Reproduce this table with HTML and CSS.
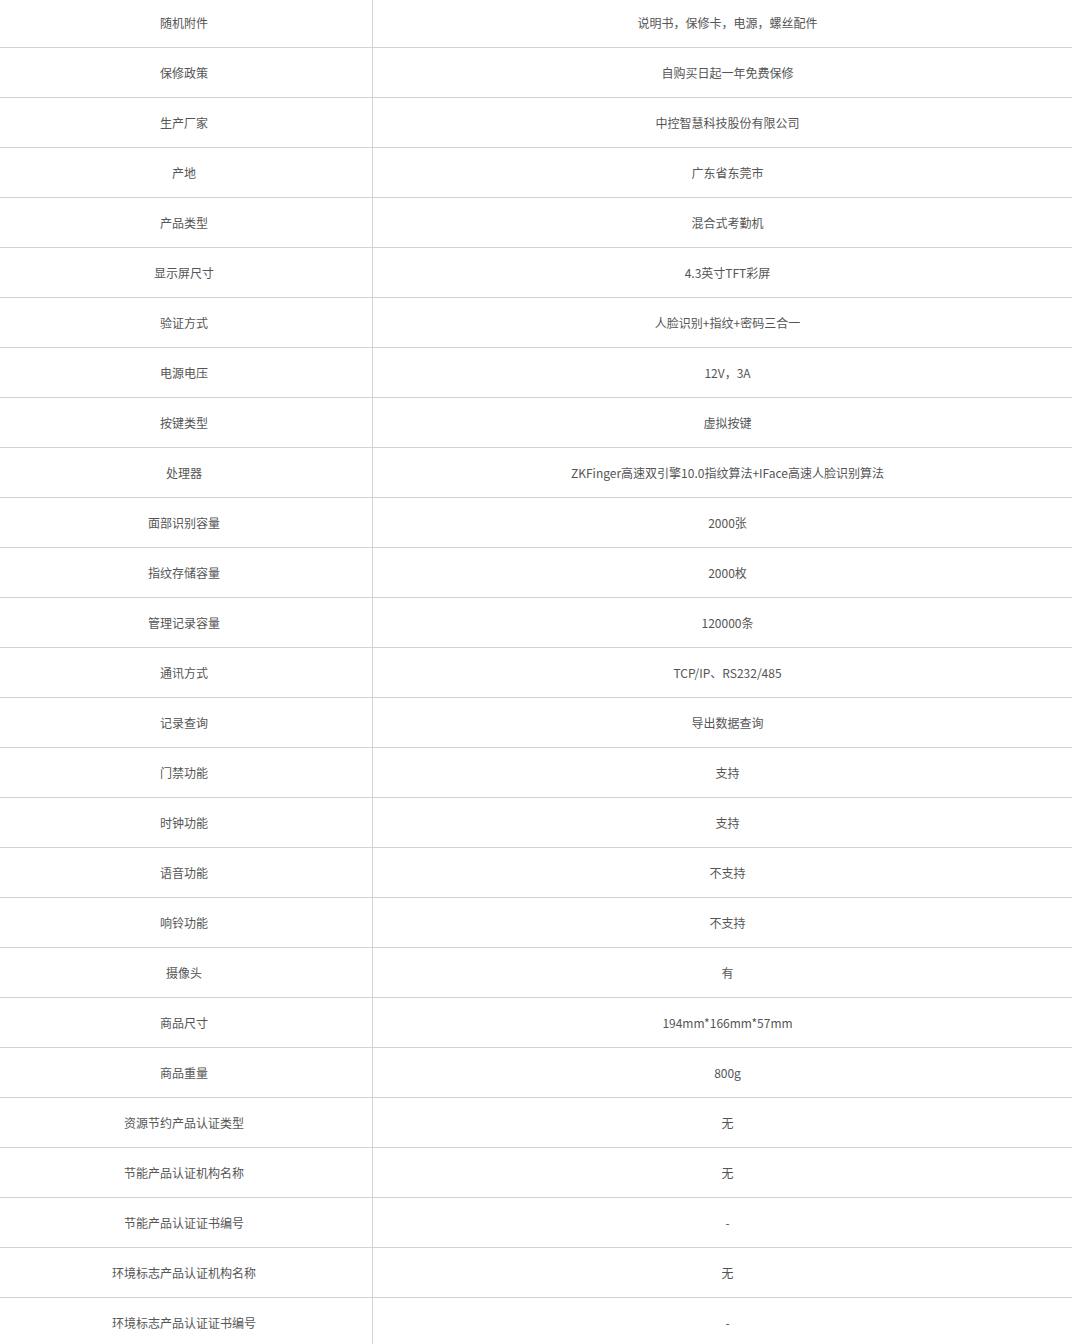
FILE: index.html
```html
<!DOCTYPE html>
<html lang="zh-CN">
<head>
<meta charset="utf-8">
<title>规格参数</title>
<link rel="stylesheet" href="styles.css">
</head>
<body>
<table class="spec">
<tbody>
<tr><td class="k">随机附件</td><td class="v">说明书，保修卡，电源，螺丝配件</td></tr>
<tr><td class="k">保修政策</td><td class="v">自购买日起一年免费保修</td></tr>
<tr><td class="k">生产厂家</td><td class="v">中控智慧科技股份有限公司</td></tr>
<tr><td class="k">产地</td><td class="v">广东省东莞市</td></tr>
<tr><td class="k">产品类型</td><td class="v">混合式考勤机</td></tr>
<tr><td class="k">显示屏尺寸</td><td class="v">4.3英寸TFT彩屏</td></tr>
<tr><td class="k">验证方式</td><td class="v">人脸识别+指纹+密码三合一</td></tr>
<tr><td class="k">电源电压</td><td class="v">12V，3A</td></tr>
<tr><td class="k">按键类型</td><td class="v">虚拟按键</td></tr>
<tr><td class="k">处理器</td><td class="v">ZKFinger高速双引擎10.0指纹算法+IFace高速人脸识别算法</td></tr>
<tr><td class="k">面部识别容量</td><td class="v">2000张</td></tr>
<tr><td class="k">指纹存储容量</td><td class="v">2000枚</td></tr>
<tr><td class="k">管理记录容量</td><td class="v">120000条</td></tr>
<tr><td class="k">通讯方式</td><td class="v">TCP/IP、RS232/485</td></tr>
<tr><td class="k">记录查询</td><td class="v">导出数据查询</td></tr>
<tr><td class="k">门禁功能</td><td class="v">支持</td></tr>
<tr><td class="k">时钟功能</td><td class="v">支持</td></tr>
<tr><td class="k">语音功能</td><td class="v">不支持</td></tr>
<tr><td class="k">响铃功能</td><td class="v">不支持</td></tr>
<tr><td class="k">摄像头</td><td class="v">有</td></tr>
<tr><td class="k">商品尺寸</td><td class="v">194mm*166mm*57mm</td></tr>
<tr><td class="k">商品重量</td><td class="v">800g</td></tr>
<tr><td class="k">资源节约产品认证类型</td><td class="v">无</td></tr>
<tr><td class="k">节能产品认证机构名称</td><td class="v">无</td></tr>
<tr><td class="k">节能产品认证证书编号</td><td class="v">-</td></tr>
<tr><td class="k">环境标志产品认证机构名称</td><td class="v">无</td></tr>
<tr><td class="k">环境标志产品认证证书编号</td><td class="v">-</td></tr>
</tbody>
</table>
</body>
</html>
```

FILE: styles.css
```css
html, body {
  margin: 0;
  padding: 0;
  background: #fff;
}
body {
  font-family: "Noto Sans CJK SC", "Noto Sans", sans-serif;
  font-size: 12px;
  color: #555;
  overflow: hidden;
}
.spec {
  width: 1072px;
  border-collapse: collapse;
  table-layout: fixed;
  margin-top: -2px;
}
.spec td {
  height: 49px;
  padding: 0;
  text-align: center;
  vertical-align: middle;
  border-bottom: 1px solid #d2d2d2;
  line-height: 16px;
}
.spec .k {
  width: 368px;
  padding-right: 4px;
  border-right: 1px solid #d2d2d2;
}
.spec .v {
  padding-left: 10px;
}
```
